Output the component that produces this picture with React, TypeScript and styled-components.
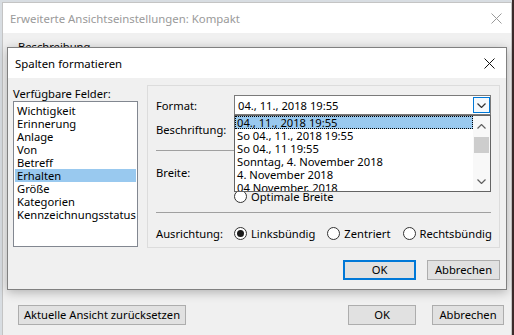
import React from 'react';
import styled, { createGlobalStyle } from 'styled-components';

const GlobalStyle = createGlobalStyle`
  html, body {
    margin: 0;
    padding: 0;
    overflow: hidden;
  }
  body {
    font-family: 'Noto Sans', 'Liberation Sans', sans-serif;
    font-size: 11.2px;
    color: #000;
  }
`;

const Desktop = styled.div`
  position: relative;
  width: 514px;
  height: 335px;
  overflow: hidden;
  background: linear-gradient(to right, #d8dde2 0 512px, #3b2a2a 512px);
`;

const OuterWindow = styled.div`
  position: absolute;
  left: 2px;
  top: 2px;
  width: 510px;
  height: 360px;
  box-sizing: border-box;
  border: 1px solid #c4c4c4;
  background: #f0f0f0;
  display: flex;
  flex-direction: column;
`;

const TitleBar = styled.div<{ $inactive?: boolean; $padLeft: number; $padRight: number }>`
  height: 30px;
  flex: none;
  background: #fff;
  display: flex;
  align-items: center;
  justify-content: space-between;
  padding: 0 ${({ $padRight }) => $padRight}px 0 ${({ $padLeft }) => $padLeft}px;
  color: ${({ $inactive }) => ($inactive ? '#9a9a9a' : '#000')};
  font-size: 11.4px;
  white-space: nowrap;
`;

const OuterContent = styled.div`
  padding: 6px 7px 0 15px;
`;

const SectionLabel = styled.div`
  line-height: 16px;
`;

const OuterFooter = styled.div`
  margin-top: 250px;
  display: flex;
  align-items: center;
  gap: 16px;
  padding: 0 7px 0 15px;
`;

const Button = styled.button<{ $w: number; $default?: boolean; $push?: boolean }>`
  width: ${({ $w }) => $w}px;
  height: 20px;
  box-sizing: border-box;
  padding: 0;
  margin: 0 ${({ $push }) => ($push ? 'auto' : '0')} 0 0;
  font: inherit;
  white-space: nowrap;
  color: #000;
  background: #e1e1e1;
  border: ${({ $default }) => ($default ? '2px solid #0078d7' : '1px solid #adadad')};
  line-height: 16px;
`;

const Dialog = styled.div`
  position: absolute;
  left: 7px;
  top: 47px;
  width: 500px;
  height: 243px;
  box-sizing: border-box;
  border: 1px solid #808080;
  background: #f0f0f0;
  box-shadow: 0 2px 10px rgba(0, 0, 0, 0.28);
  display: flex;
  flex-direction: column;
`;

const DialogBody = styled.div`
  display: flex;
  gap: 9px;
  padding: 7px 6px 0 5px;
`;

const LeftCol = styled.div`
  width: 125px;
  flex: none;
  padding-top: 2px;
  display: flex;
  flex-direction: column;
`;

const FieldLabel = styled.div`
  line-height: 14px;
  white-space: nowrap;
`;

const ListBox = styled.div`
  height: 146px;
  box-sizing: border-box;
  border: 1px solid #828790;
  background: #fff;
  padding-top: 2px;
  overflow: hidden;
`;

const ListItem = styled.div<{ $selected?: boolean }>`
  height: 13px;
  line-height: 13px;
  margin: 0 1px;
  padding-left: 2px;
  white-space: nowrap;
  background: ${({ $selected }) => ($selected ? '#99c9ef' : 'transparent')};
`;

const GroupBox = styled.div`
  position: relative;
  flex: 1;
  min-width: 0;
  height: 163px;
  box-sizing: border-box;
  border: 1px solid #dcdcdc;
  padding: 9px 8px 0 8px;
`;

const Row = styled.div<{ $top: number; $h?: number }>`
  display: flex;
  align-items: center;
  margin-top: ${({ $top }) => $top}px;
  height: ${({ $h }) => $h ?? 20}px;
  white-space: nowrap;
`;

const RowLabel = styled.div`
  width: 78px;
  flex: none;
`;

const Separator = styled.div<{ $top: number }>`
  margin-top: ${({ $top }) => $top}px;
  height: 1px;
  background: #a0a0a0;
`;

const Combo = styled.div`
  flex: 1;
  min-width: 0;
  height: 20px;
  box-sizing: border-box;
  border: 1px solid #7a7a7a;
  background: #fff;
  display: flex;
  align-items: center;
  padding: 0 0 0 3px;
`;

const ComboText = styled.span`
  flex: 1;
`;

const ComboButton = styled.div`
  width: 17px;
  height: 16px;
  box-sizing: border-box;
  border: 1px solid #0078d7;
  background: #f4f9fd;
  display: flex;
  align-items: center;
  justify-content: center;
`;

const RadioGroup = styled.div`
  display: flex;
  align-items: center;
  gap: 12px;
`;

const Radio = styled.label`
  display: flex;
  align-items: center;
  gap: 4px;
`;

const RadioCircle = styled.span<{ $checked?: boolean }>`
  width: 13px;
  height: 13px;
  box-sizing: border-box;
  border-radius: 50%;
  border: 1px solid #333;
  background: #fff;
  display: flex;
  align-items: center;
  justify-content: center;
  &::after {
    content: '';
    width: 7px;
    height: 7px;
    border-radius: 50%;
    background: ${({ $checked }) => ($checked ? '#1a1a1a' : 'transparent')};
  }
`;

const Popup = styled.div`
  position: absolute;
  left: 86px;
  top: 29px;
  width: 257px;
  height: 77px;
  box-sizing: border-box;
  border: 1px solid #646464;
  background: #fff;
  display: flex;
  z-index: 2;
`;

const PopupList = styled.div`
  flex: 1;
  overflow: hidden;
`;

const PopupItem = styled.div<{ $selected?: boolean }>`
  height: 13px;
  line-height: 13px;
  padding-left: 2px;
  white-space: nowrap;
  box-sizing: border-box;
  background: ${({ $selected }) => ($selected ? '#99c9ef' : 'transparent')};
  outline: ${({ $selected }) => ($selected ? '1px dotted #000' : 'none')};
  outline-offset: -1px;
`;

const ScrollBar = styled.div`
  width: 17px;
  flex: none;
  background: #f8f8f8;
  display: flex;
  flex-direction: column;
  align-items: center;
`;

const ScrollArrow = styled.div`
  height: 20px;
  width: 17px;
  display: flex;
  align-items: center;
  justify-content: center;
`;

const ScrollThumb = styled.div`
  width: 15px;
  height: 16px;
  margin-top: 1px;
  background: #cdcdcd;
`;

const ScrollTrack = styled.div`
  flex: 1;
`;

const DialogFooter = styled.div`
  display: flex;
  justify-content: flex-end;
  gap: 11px;
  padding: 12px 6px 0 0;
`;

const CloseIcon: React.FC<{ color: string }> = ({ color }) => (
  <svg width="11" height="11" viewBox="0 0 11 11">
    <path d="M0.5 0.5 L10.5 10.5 M10.5 0.5 L0.5 10.5" stroke={color} strokeWidth="1" fill="none" />
  </svg>
);

const Chevron: React.FC<{ up?: boolean; color: string }> = ({ up, color }) => (
  <svg width="9" height="5" viewBox="0 0 9 5">
    <path
      d={up ? 'M0.5 4.5 L4.5 0.5 L8.5 4.5' : 'M0.5 0.5 L4.5 4.5 L8.5 0.5'}
      stroke={color}
      strokeWidth="1.2"
      fill="none"
    />
  </svg>
);

const fields = [
  'Wichtigkeit',
  'Erinnerung',
  'Anlage',
  'Von',
  'Betreff',
  'Erhalten',
  'Größe',
  'Kategorien',
  'Kennzeichnungsstatus',
];

const formats = [
  '04., 11., 2018 19:55',
  'So 04., 11., 2018 19:55',
  'So 04., 11 19:55',
  'Sonntag, 4. November 2018',
  '4. November 2018',
  '04 November, 2018',
];

const App: React.FC = () => {
  return (
    <>
      <GlobalStyle />
      <Desktop>
        <OuterWindow>
          <TitleBar $inactive $padLeft={7} $padRight={9}>
            <span>Erweiterte Ansichtseinstellungen: Kompakt</span>
            <CloseIcon color="#9a9a9a" />
          </TitleBar>
          <OuterContent>
            <SectionLabel>Beschreibung</SectionLabel>
          </OuterContent>
          <OuterFooter>
            <Button $w={168} $push>
              Aktuelle Ansicht zurücksetzen
            </Button>
            <Button $w={68}>OK</Button>
            <Button $w={72}>Abbrechen</Button>
          </OuterFooter>
        </OuterWindow>

        <Dialog>
          <TitleBar $padLeft={7} $padRight={11}>
            <span>Spalten formatieren</span>
            <CloseIcon color="#111" />
          </TitleBar>
          <DialogBody>
            <LeftCol>
              <FieldLabel>Verfügbare Felder:</FieldLabel>
              <ListBox>
                {fields.map((f) => (
                  <ListItem key={f} $selected={f === 'Erhalten'}>
                    {f}
                  </ListItem>
                ))}
              </ListBox>
            </LeftCol>
            <GroupBox>
              <Row $top={0}>
                <RowLabel>Format:</RowLabel>
                <Combo>
                  <ComboText>{formats[0]}</ComboText>
                  <ComboButton>
                    <Chevron color="#333" />
                  </ComboButton>
                </Combo>
              </Row>
              <Row $top={4}>
                <RowLabel>Beschriftung:</RowLabel>
              </Row>
              <Separator $top={11} />
              <Row $top={11}>
                <RowLabel>Breite:</RowLabel>
              </Row>
              <Row $top={6} $h={16}>
                <RowLabel />
                <Radio>
                  <RadioCircle />
                  Optimale Breite
                </Radio>
              </Row>
              <Separator $top={8} />
              <Row $top={10}>
                <RowLabel>Ausrichtung:</RowLabel>
                <RadioGroup>
                  <Radio>
                    <RadioCircle $checked />
                    Linksbündig
                  </Radio>
                  <Radio>
                    <RadioCircle />
                    Zentriert
                  </Radio>
                  <Radio>
                    <RadioCircle />
                    Rechtsbündig
                  </Radio>
                </RadioGroup>
              </Row>
              <Popup>
                <PopupList>
                  {formats.map((f, i) => (
                    <PopupItem key={f} $selected={i === 0}>
                      {f}
                    </PopupItem>
                  ))}
                </PopupList>
                <ScrollBar>
                  <ScrollArrow>
                    <Chevron up color="#606060" />
                  </ScrollArrow>
                  <ScrollThumb />
                  <ScrollTrack />
                  <ScrollArrow>
                    <Chevron color="#606060" />
                  </ScrollArrow>
                </ScrollBar>
              </Popup>
            </GroupBox>
          </DialogBody>
          <DialogFooter>
            <Button $w={73} $default>
              OK
            </Button>
            <Button $w={73}>Abbrechen</Button>
          </DialogFooter>
        </Dialog>
      </Desktop>
    </>
  );
};

export default App;
